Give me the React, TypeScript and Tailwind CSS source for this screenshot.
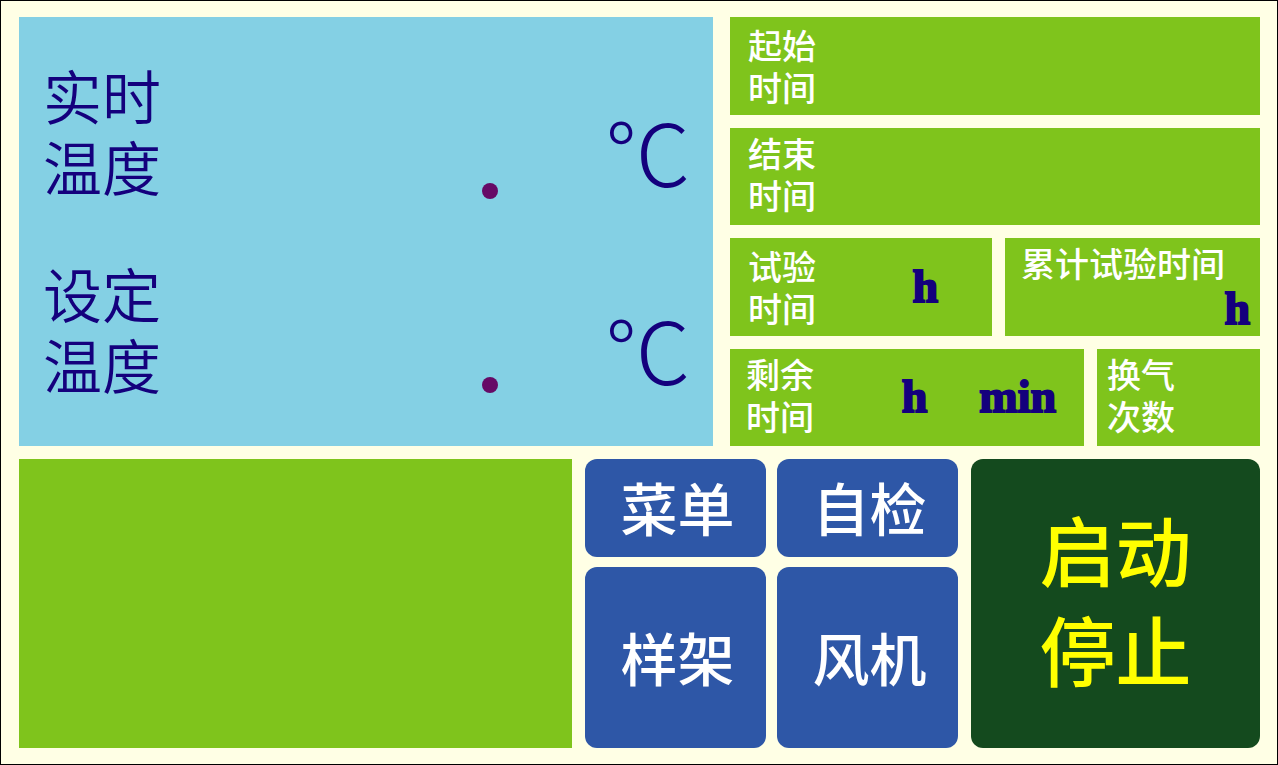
import type { ReactNode } from "react";

const tile = "flex bg-[#7fc41c]";
const caption = "text-[34px] leading-[42px] font-medium text-white";
const unit =
  "font-['Liberation_Serif',serif] text-[46px] leading-[46px] font-bold text-[#14007d] [-webkit-text-stroke:2px_#14007d]";
const key =
  "flex items-center justify-center rounded-xl bg-[#2e57a7] pb-1 pl-1 text-[57px] leading-[64px] font-medium text-white";

function Caption({ lines }: { lines: string[] }) {
  return (
    <h2 className={caption}>
      {lines.map((line) => (
        <span key={line} className="block whitespace-nowrap">
          {line}
        </span>
      ))}
    </h2>
  );
}

function Temperature({ lines, point }: { lines: string[]; point: string }) {
  return (
    <div className="grid grid-cols-[439fr_209fr]">
      <h2 className="text-[59px] leading-[71px] font-[350]">
        {lines.map((line) => (
          <span key={line} className="block whitespace-nowrap">
            {line}
          </span>
        ))}
      </h2>
      <div className="flex justify-between">
        <span className={`size-4 self-end rounded-full bg-[#660a66] ${point}`} />
        <span className="self-end text-[86px] leading-[102px] font-light">℃</span>
      </div>
    </div>
  );
}

function Key({ children }: { children: ReactNode }) {
  return (
    <button type="button" className={key}>
      {children}
    </button>
  );
}

export default function App() {
  return (
    <main
      lang="zh-CN"
      className="grid min-h-screen grid-rows-[429fr_289fr] gap-[13px] border border-black bg-[#ffffe5] py-4 pr-[17px] pl-[18px] font-['Noto_Sans_CJK_SC',sans-serif]"
    >
      <div className="grid grid-cols-[694fr_530fr] gap-[17px]">
        <section className="flex flex-col gap-14 bg-[#84d0e4] pt-[42px] pr-[22px] pl-6 text-[#14007d]">
          <Temperature lines={["实时", "温度"]} point="mb-0.5" />
          <Temperature lines={["设定", "温度"]} point="mb-1.5" />
        </section>

        <section className="grid grid-rows-4 gap-[13px]">
          <div className={`${tile} items-center pl-[18px]`}>
            <Caption lines={["起始", "时间"]} />
          </div>
          <div className={`${tile} items-center pb-1 pl-[18px]`}>
            <Caption lines={["结束", "时间"]} />
          </div>
          <div className="grid grid-cols-[262fr_255fr] gap-[13px]">
            <div className={`${tile} items-center justify-between pr-[54px] pl-[18px]`}>
              <Caption lines={["试验", "时间"]} />
              <span className={unit}>h</span>
            </div>
            <div className={`${tile} flex-col justify-between pt-1 pr-[10px] pb-1 pl-4`}>
              <Caption lines={["累计试验时间"]} />
              <span className={`${unit} self-end`}>h</span>
            </div>
          </div>
          <div className="grid grid-cols-[354fr_163fr] gap-[13px]">
            <div className={`${tile} items-center pr-7 pb-1 pl-4`}>
              <Caption lines={["剩余", "时间"]} />
              <span className={`${unit} ml-auto pt-1`}>h</span>
              <span className={`${unit} ml-[52px] pt-1`}>min</span>
            </div>
            <div className={`${tile} items-center pb-1 pl-[10px]`}>
              <Caption lines={["换气", "次数"]} />
            </div>
          </div>
        </section>
      </div>

      <div className="grid grid-cols-[553fr_373fr_289fr] gap-[13px]">
        <section className="bg-[#7fc41c]" />
        <nav className="grid grid-cols-2 grid-rows-[98fr_181fr] gap-x-[11px] gap-y-[10px]">
          <Key>菜单</Key>
          <Key>自检</Key>
          <Key>样架</Key>
          <Key>风机</Key>
        </nav>
        <button
          type="button"
          className="flex flex-col items-center justify-center rounded-xl bg-[#144a1e] pb-3 text-[76px] leading-[100px] font-medium text-[#ffff00]"
        >
          <span>启动</span>
          <span>停止</span>
        </button>
      </div>
    </main>
  );
}
